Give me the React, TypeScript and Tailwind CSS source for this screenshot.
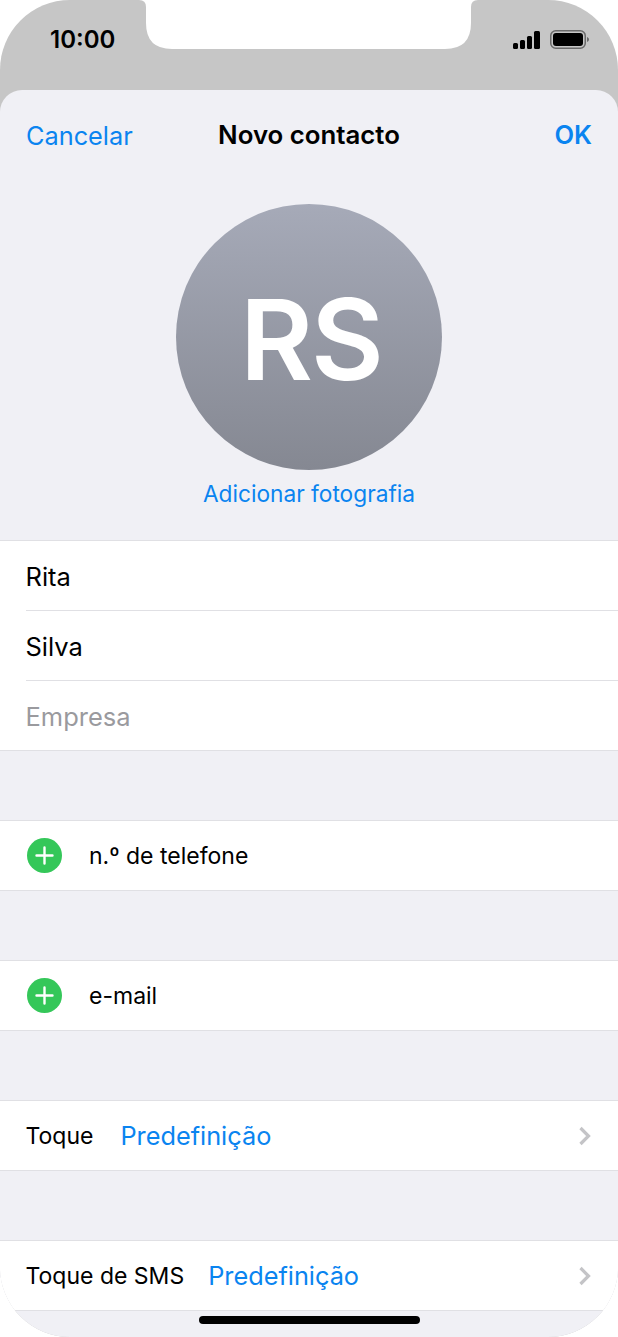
import React from "react";

const Divider = () => <div className="h-px bg-[#e0e0e4]" />;

function PlusRow({ label }: { label: string }) {
  return (
    <div className="flex h-[69px] items-center bg-white pl-[27px]">
      <svg width="35" height="35" viewBox="0 0 35 35" className="shrink-0">
        <circle cx="17.5" cy="17.5" r="17.5" fill="#34c759" />
        <path d="M17.5 9.500v16M9.500 17.500h16" stroke="#fff" strokeWidth="2.4" strokeLinecap="round" />
      </svg>
      <span className="ml-[27px] pt-[2px] text-[23px] text-black">{label}</span>
    </div>
  );
}

function TextRow({ label, muted }: { label: string; muted?: boolean }) {
  return (
    <div className={`flex h-[69px] items-center bg-white pl-[25.5px] pt-[3px] text-[25.5px] ${muted ? "text-[#9a9a9e]" : "text-black"}`}>
      {label}
    </div>
  );
}

function ToneRow({ label, gap }: { label: string; gap: string }) {
  return (
    <div className="flex h-[69px] items-center bg-white pl-[25.5px] pr-[26px]">
      <span className="pt-[1px] text-[23px] text-black">{label}</span>
      <span className={`${gap} pt-[1px] text-[25.3px] text-[#0a84f0]`}>Predefinição</span>
      <svg width="14" height="20" viewBox="0 0 14 20" className="ml-auto">
        <path d="M2.500 2l8 8-8 8" fill="none" stroke="#c4c4c7" strokeWidth="3.200" />
      </svg>
    </div>
  );
}

export default function App() {
  return (
    <div className="h-[1337px] w-[618px] bg-white font-['Inter',sans-serif]">
      <div className="relative flex h-full w-full flex-col overflow-hidden rounded-[70px] bg-[#c6c6c6]">
        <svg width="618" height="50" viewBox="0 0 618 50" className="absolute left-0 top-0">
          <path d="M139 0Q146 0 146 7V23Q146 49 172 49H445Q471 49 471 23V7Q471 0 478 0Z" fill="#fff" />
        </svg>
        <div className="relative flex h-[90px] shrink-0 items-start justify-between pl-[50px] pr-[29px] pt-[25px]">
          <span className="text-[24px] font-semibold leading-[30px] text-black">10:00</span>
          <div className="flex items-center gap-[10px] pt-[5px]">
            <svg width="27" height="18" viewBox="0 0 27 18">
              <rect x="0" y="12" width="5" height="6" rx="1.500" fill="#000" />
              <rect x="7" y="9" width="5" height="9" rx="1.500" fill="#000" />
              <rect x="14" y="5" width="5" height="13" rx="1.500" fill="#000" />
              <rect x="21" y="0" width="6" height="18" rx="1.500" fill="#000" />
            </svg>
            <svg width="39" height="19" viewBox="0 0 39 19">
              <rect x="0.750" y="0.750" width="34.500" height="17.500" rx="5" fill="none" stroke="#6a6a6a" strokeWidth="1.500" />
              <rect x="3" y="3" width="30" height="13" rx="3" fill="#000" />
              <path d="M37 7c1.200.4 2 1.400 2 2.500s-.8 2.100-2 2.500z" fill="#6a6a6a" />
            </svg>
          </div>
        </div>

        <div className="relative flex flex-1 flex-col rounded-t-[22px] bg-[#f0f0f5]">
          <div className="grid h-[90px] grid-cols-[1fr_auto_1fr] items-center px-[26px] pt-[1px]">
            <span className="text-[25.3px] text-[#0a84f0]">Cancelar</span>
            <span className="text-[25.8px] font-semibold text-black">Novo contacto</span>
            <span className="justify-self-end text-[25.5px] font-semibold text-[#0a84f0]">OK</span>
          </div>

          <div className="flex flex-col items-center pt-[24px]">
            <div className="flex h-[266px] w-[266px] items-center justify-center rounded-full bg-gradient-to-b from-[#a6aab8] to-[#858892] pl-[4px] pt-[4px] text-[112px] font-semibold tracking-[-2px] text-white">
              RS
            </div>
            <div className="mt-[10px] h-[60px] text-[22.7px] leading-[28px] text-[#0a84f0]">Adicionar fotografia</div>
          </div>

          <Divider />
          <TextRow label="Rita" />
          <div className="bg-white pl-[26px]"><Divider /></div>
          <TextRow label="Silva" />
          <div className="bg-white pl-[26px]"><Divider /></div>
          <TextRow label="Empresa" muted />
          <Divider />

          <div className="h-[69px]" />
          <Divider />
          <PlusRow label="n.º de telefone" />
          <Divider />

          <div className="h-[69px]" />
          <Divider />
          <PlusRow label="e-mail" />
          <Divider />

          <div className="h-[69px]" />
          <Divider />
          <ToneRow label="Toque" gap="ml-[27px]" />
          <Divider />

          <div className="h-[69px]" />
          <Divider />
          <ToneRow label="Toque de SMS" gap="ml-[24px]" />
          <Divider />
        </div>

        <div className="absolute bottom-[13px] left-[199px] h-[8px] w-[221px] rounded-full bg-black" />
      </div>
    </div>
  );
}
